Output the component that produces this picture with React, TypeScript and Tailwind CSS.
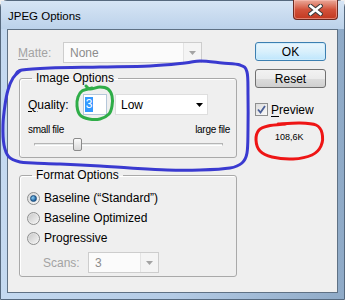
import React from "react";

function smooth(p: number[][]) {
  let d = `M${p[0][0]},${p[0][1]}`;
  for (let i = 0; i < p.length - 1; i++) {
    const p0 = p[i - 1] || p[i];
    const p1 = p[i];
    const p2 = p[i + 1];
    const p3 = p[i + 2] || p2;
    const c1x = p1[0] + (p2[0] - p0[0]) / 6;
    const c1y = p1[1] + (p2[1] - p0[1]) / 6;
    const c2x = p2[0] - (p3[0] - p1[0]) / 6;
    const c2y = p2[1] - (p3[1] - p1[1]) / 6;
    d += ` C${c1x},${c1y} ${c2x},${c2y} ${p2[0]},${p2[1]}`;
  }
  return d;
}

const BLUE = [
  [16, 74], [22, 70], [50, 68], [100, 67], [150, 66], [185, 63], [200, 61], [222, 63], [240, 65],
  [247, 72], [248, 95], [248, 130], [247, 153], [242, 163], [230, 168], [200, 170], [167, 170],
  [130, 168], [100, 166], [60, 164], [33, 163], [20, 162], [9, 157], [4, 145], [3, 125], [5, 105],
  [8, 90], [13, 78], [20, 71],
];
const GREEN = [
  [86, 86], [90, 89], [100, 87], [108, 89], [112, 96], [112, 106], [109, 114], [100, 119], [89, 119],
  [80, 115], [77, 106], [78, 97], [82, 91], [92, 88],
];
const RED = [
  [278, 124], [300, 123], [316, 125], [322, 133], [321, 146], [312, 155], [293, 159], [272, 157],
  [260, 151], [256, 140], [259, 130], [268, 126], [286, 124],
];

function CloseButton() {
  return (
    <div className="-mt-[1px] mr-[6px] w-[45px] h-[20px] rounded-b-[4px] border border-t-0 border-[#6b2a22] bg-gradient-to-b from-[#e9a99a] via-[#d2523b] to-[#c2381f] shadow-[inset_0_0_0_1px_rgba(255,200,190,0.5)] flex items-center justify-center">
      <svg width="15" height="12" viewBox="0 0 15 12">
        <path d="M2.5 2 L12.5 10 M12.5 2 L2.5 10" stroke="#3b3b3b" strokeWidth="4.6" strokeLinecap="square" />
        <path d="M2.5 2 L12.5 10 M12.5 2 L2.5 10" stroke="#ffffff" strokeWidth="2.6" strokeLinecap="square" />
      </svg>
    </div>
  );
}

function DisabledCombo({ value, width, inner }: { value: string; width: string; inner: string }) {
  return (
    <div className={`${width} h-[21px] border border-[#cdcdcd] bg-[#f4f4f4] flex items-center`}>
      <div className={`${inner} h-[19px] bg-[#fbfbfb] border-r border-[#e4e4e4] flex items-center pl-[6px] text-[#8c8c8c]`}>
        {value}
      </div>
      <div className="flex-1 flex items-center justify-center">
        <svg width="7" height="4" viewBox="0 0 7 4">
          <path d="M0 0 H7 L3.5 4 Z" fill="#a3a3a3" />
        </svg>
      </div>
    </div>
  );
}

function Radio({ checked }: { checked?: boolean }) {
  return (
    <div className="w-[13px] h-[13px] rounded-full border border-[#8e8f8f] bg-gradient-to-br from-[#d8d8d8] to-[#f8f8f8] flex items-center justify-center">
      {checked ? (
        <div className="w-[7px] h-[7px] rounded-full bg-[radial-gradient(circle_at_35%_35%,#8fd0f5,#1c5f9c_70%)] border border-[#1d4f7f]" />
      ) : (
        <div className="w-[9px] h-[9px] rounded-full bg-gradient-to-br from-[#cbcbcb] to-[#f2f2f2]" />
      )}
    </div>
  );
}

export default function App() {
  return (
    <div className="relative w-[345px] h-[300px] overflow-hidden font-['Liberation_Sans',Arial,sans-serif] text-[12px] leading-[14px] text-black bg-[#efefef]">
      <div className="flex flex-col w-full h-full rounded-t-[7px] border border-[#56697e] bg-gradient-to-r from-[#c4d9f0] via-[#b4cbe5] to-[#8faac7]">
        <div className="h-[28px] flex items-start justify-between bg-gradient-to-b from-[#d6e5f5] to-[#bcd2ea]">
          <span className="ml-[7px] mt-[8px] text-[11.5px] leading-[14px]">JPEG Options</span>
          <CloseButton />
        </div>
        <div className="mx-[6px] h-[264px] border border-[#5f7184] bg-[#efefef] flex pl-[10px] pt-[12px]">
          {/* Left column */}
          <div className="w-[219px] flex flex-col">
            <div className="flex h-[21px] items-center">
              <span className="w-[45px] text-[#a3a3a3]">
                <span className="underline underline-offset-[2px]">M</span>atte:
              </span>
              <DisabledCombo value="None" width="w-[139px]" inner="w-[120px]" />
            </div>

            <fieldset className="ml-[1px] mt-[8px] w-[218px] border border-[#a9a9a9] rounded-[3px] shadow-[inset_1px_1px_0_#ffffff] pt-[9px] pb-[6px]">
              <legend className="ml-[12px] px-[4px] leading-[14px]">Image Options</legend>
              <div className="flex items-center pl-[8px] h-[21px]">
                <span className="w-[55px]">
                  <span className="underline underline-offset-[2px]">Q</span>uality:
                </span>
                <div className="w-[24px] h-[21px] border border-[#b5c7da] bg-white flex items-center pl-[1px]">
                  <span className="bg-[#3399ff] text-white w-[8px] h-[15px] leading-[15px] text-center">3</span>
                </div>
                <div className="ml-[8px] w-[93px] h-[21px] border border-[#dedede] bg-white flex items-center justify-between pl-[5px] pr-[4px]">
                  <span>Low</span>
                  <svg width="7" height="4" viewBox="0 0 7 4">
                    <path d="M0 0 H7 L3.5 4 Z" fill="#000" />
                  </svg>
                </div>
              </div>
              <div className="mt-[9px] flex justify-between pl-[8px] pr-[6px] text-[10px] leading-[12px] tracking-[-0.3px]">
                <span>small file</span>
                <span>large file</span>
              </div>
              <div className="relative mt-[2px] ml-[14px] w-[189px] h-[13px]">
                <div className="absolute left-0 right-0 top-[5px] h-[3px] border border-[#b5b5b5] bg-[#e7eaea] border-b-[#ffffff]" />
                <div className="absolute left-[39px] top-0 w-[9px] h-[13px] rounded-[2px] border border-[#8a8a8a] bg-gradient-to-b from-[#fbfbfb] to-[#d8d8d8]" />
              </div>
            </fieldset>

            <fieldset className="ml-[1px] mt-[10px] w-[218px] border border-[#a9a9a9] rounded-[3px] shadow-[inset_1px_1px_0_#ffffff] pt-[6px] pb-[3px]">
              <legend className="ml-[12px] px-[4px] leading-[14px]">Format Options</legend>
              {["Baseline (\u201cStandard\u201d)", "Baseline Optimized", "Progressive"].map((t, i) => (
                <div key={t} className="h-[20px] flex items-center pl-[7px] gap-[4px]">
                  <Radio checked={i === 0} />
                  <span>{t}</span>
                </div>
              ))}
              <div className="mt-[4px] flex items-center pl-[23px] h-[21px]">
                <span className="w-[45px] text-[#a3a3a3]">Scans:</span>
                <DisabledCombo value="3" width="w-[71px]" inner="w-[52px]" />
              </div>
            </fieldset>
          </div>

          {/* Right column */}
          <div className="ml-[18px] w-[71px] flex flex-col">
            <button className="h-[19px] rounded-[3px] border border-[#3c7fb1] bg-gradient-to-b from-[#eaf6fd] via-[#d9f0fc] to-[#bee6fd] shadow-[inset_0_0_0_1px_#d0ecfb] leading-[14px]">
              OK
            </button>
            <button className="mt-[8px] h-[19px] rounded-[3px] border border-[#707070] bg-[linear-gradient(#f2f2f2_0%,#ebebeb_50%,#dddddd_50%,#cfcfcf_100%)] leading-[14px]">
              Reset
            </button>
            <div className="mt-[15px] flex items-center h-[13px] gap-[3px]">
              <div className="w-[13px] h-[13px] border border-[#8e8f8f] bg-gradient-to-br from-[#dcdcdc] to-[#fafafa] flex items-center justify-center">
                <svg width="9" height="9" viewBox="0 0 9 9">
                  <path d="M1 4.5 L3.5 7.5 L8 1" stroke="#4a5f97" strokeWidth="1.8" fill="none" />
                </svg>
              </div>
              <span>
                <span className="underline underline-offset-[2px]">P</span>review
              </span>
            </div>
            <div className="mt-[16px] ml-[20px] text-[9px] leading-[11px]">108,6K</div>
          </div>
        </div>
      </div>

      <svg className="absolute inset-0 pointer-events-none" width="345" height="300" viewBox="0 0 345 300">
        <path d={smooth(BLUE)} stroke="#3a3ad0" strokeWidth="3" fill="none" strokeLinecap="round" strokeLinejoin="round" />
        <path d={smooth(GREEN)} stroke="#2fad48" strokeWidth="3" fill="none" strokeLinecap="round" strokeLinejoin="round" />
        <path d={smooth(RED)} stroke="#ee1515" strokeWidth="3" fill="none" strokeLinecap="round" strokeLinejoin="round" />
      </svg>
    </div>
  );
}
